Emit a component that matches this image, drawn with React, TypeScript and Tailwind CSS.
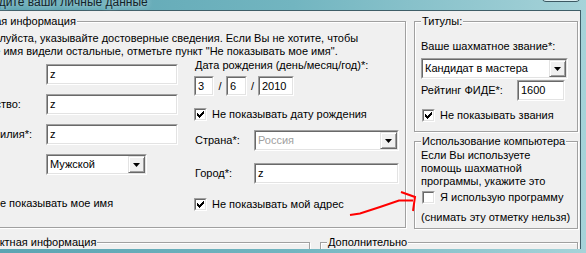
import React from 'react';

const outerSunk = 'border border-t-[#a0a0a0] border-l-[#a0a0a0] border-r-white border-b-white';
const innerSunk = 'border border-t-[#696969] border-l-[#696969] border-r-[#e3e3e3] border-b-[#e3e3e3] bg-white';
const etched = 'border border-[#a0a0a0] shadow-[inset_1px_1px_0_#fff,1px_1px_0_#fff]';

function Field({ w, h, value }: { w: string; h: string; value: string }) {
  return (
    <div className={`${outerSunk} ${w} ${h} shrink-0`}>
      <div className={`${innerSunk} h-full flex items-center pl-[2px] whitespace-nowrap overflow-hidden`}>{value}</div>
    </div>
  );
}

function DropBtn() {
  return (
    <div className="h-full w-[17px] shrink-0 border border-t-[#e3e3e3] border-l-[#e3e3e3] border-b-[#696969] border-r-[#696969] bg-[#f0f0f0] shadow-[inset_1px_1px_0_#fff,inset_-1px_-1px_0_#a0a0a0] flex items-center justify-center">
      <svg width="7" height="4" viewBox="0 0 7 4">
        <path d="M0 0h7L3.5 4z" fill="#000" />
      </svg>
    </div>
  );
}

function Select({ w, value, disabled }: { w: string; value: string; disabled?: boolean }) {
  return (
    <div className={`${outerSunk} ${w} h-[21px] shrink-0`}>
      <div className={`${innerSunk} h-full flex items-center`}>
        <div className={`flex-1 pl-[2px] whitespace-nowrap ${disabled ? 'text-[#a0a0a0]' : ''}`}>{value}</div>
        <DropBtn />
      </div>
    </div>
  );
}

function Check({ on }: { on?: boolean }) {
  return (
    <div className={`${outerSunk} w-[13px] h-[13px] shrink-0`}>
      <div className={`${innerSunk} w-full h-full flex items-center justify-center`}>
        {on && (
          <svg width="7" height="7" viewBox="0 0 7 7">
            <path
              d="M6 0h1v1h-1z M5 1h2v1h-2z M0 2h1v1h-1z M4 2h3v1h-3z M0 3h2v1h-2z M3 3h3v1h-3z M0 4h5v1h-5z M1 5h3v1h-3z M2 6h1v1h-1z"
              fill="#000"
            />
          </svg>
        )}
      </div>
    </div>
  );
}

function Legend({ children }: { children: React.ReactNode }) {
  return <div className="-mt-[7px] ml-[6px] px-[1px] w-fit bg-[#f0f0f0] whitespace-nowrap">{children}</div>;
}

export default function App() {
  return (
    <div className="relative w-[586px] h-[253px] overflow-hidden bg-gradient-to-r from-[#5ca4b2] via-[#72b5c0] to-[#a6d3d9] font-['Liberation_Sans',Arial,sans-serif] text-[11px] leading-[13px] text-black">
      {/* title bar */}
      <div className="relative h-[14px]">
        <div className="-ml-[22px] -mt-[4px] text-[12px] leading-[13px] text-[#132329] whitespace-nowrap [text-shadow:0_0_6px_rgba(255,255,255,0.8)]">
          Введите ваши личные данные
        </div>
        <div className="absolute left-[541px] top-[-10px] w-[40px] h-[16px] rounded-b-[5px] border border-[#3c5862] bg-[#b5dce1]/50 shadow-[inset_0_0_0_1px_rgba(255,255,255,0.55)]">
          <svg className="absolute left-[13px] top-[2px]" width="12" height="10" viewBox="0 0 12 10">
            <path d="M1 0 L11 10 M11 0 L1 10" stroke="#3c5862" strokeWidth="3.4" />
            <path d="M1 0 L11 10 M11 0 L1 10" stroke="#fff" strokeWidth="1.6" />
          </svg>
        </div>
      </div>

      {/* client area */}
      <div className="w-[581px] h-[239px] bg-[#f0f0f0] border-t border-r border-[#3f5e68] overflow-hidden">
        <div className="flex items-start mt-[10px]">
          {/* personal info */}
          <div className={`ml-[-38px] w-[444px] h-[207px] shrink-0 ${etched}`}>
            <Legend>Личная информация</Legend>
            <div className="mt-[4px] pl-[9px] whitespace-nowrap">
              Пожалуйста, указывайте достоверные сведения. Если Вы не хотите, чтобы
              <br />
              Ваше имя видели остальные, отметьте пункт "Не показывать мое имя".
            </div>
            <div className="flex">
              <div className="pt-[6px] flex flex-col gap-[9px]">
                <div className="flex items-center h-[21px]">
                  <div className="w-[83px] pl-[7px] whitespace-nowrap">Имя*:</div>
                  <Field w="w-[132px]" h="h-[21px]" value="z" />
                </div>
                <div className="flex items-center h-[21px]">
                  <div className="w-[83px] pl-[7px] whitespace-nowrap">Отчество:</div>
                  <Field w="w-[132px]" h="h-[21px]" value="z" />
                </div>
                <div className="flex items-center h-[21px]">
                  <div className="w-[83px] pl-[15px] whitespace-nowrap">Фамилия*:</div>
                  <Field w="w-[132px]" h="h-[21px]" value="z" />
                </div>
                <div className="flex items-center h-[21px]">
                  <div className="w-[83px] pl-[7px] whitespace-nowrap">Пол*:</div>
                  <Select w="w-[101px]" value="Мужской" />
                </div>
                <div className="flex items-center h-[13px] mt-[13px] pl-[11px]">
                  <Check on />
                  <span className="ml-[5px] whitespace-nowrap">Не показывать мое имя</span>
                </div>
              </div>

              <div className="ml-[16px] pt-[1px] flex flex-col">
                <div className="whitespace-nowrap pl-[1px]">Дата рождения (день/месяц/год)*:</div>
                <div className="flex items-center mt-[4px] h-[20px]">
                  <Field w="w-[20px]" h="h-[20px]" value="3" />
                  <span className="w-[12px] text-center">/</span>
                  <Field w="w-[21px]" h="h-[20px]" value="6" />
                  <span className="w-[11px] text-center">/</span>
                  <Field w="w-[36px]" h="h-[20px]" value="2010" />
                </div>
                <div className="flex items-center h-[13px] mt-[12px]">
                  <Check on />
                  <span className="ml-[5px] whitespace-nowrap">Не показывать дату рождения</span>
                </div>
                <div className="flex items-center h-[21px] mt-[9px]">
                  <div className="w-[60px] pl-[1px] whitespace-nowrap">Страна*:</div>
                  <Select w="w-[145px]" value="Россия" disabled />
                </div>
                <div className="flex items-center h-[21px] mt-[12px]">
                  <div className="w-[60px] pl-[1px] whitespace-nowrap">Город*:</div>
                  <Field w="w-[145px]" h="h-[21px]" value="z" />
                </div>
                <div className="flex items-center h-[13px] mt-[14px]">
                  <Check on />
                  <span className="ml-[5px] whitespace-nowrap">Не показывать мой адрес</span>
                </div>
              </div>
            </div>
          </div>

          {/* right column */}
          <div className="ml-[8px] flex flex-col">
            <div className={`w-[164px] h-[111px] ${etched}`}>
              <Legend>Титулы:</Legend>
              <div className="px-[6px]">
                <div className="mt-[12px] whitespace-nowrap">Ваше шахматное звание*:</div>
                <div className="mt-[5px]">
                  <Select w="w-[147px]" value="Кандидат в мастера" />
                </div>
                <div className="mt-[1px] flex items-center h-[21px]">
                  <div className="w-[96px] whitespace-nowrap">Рейтинг ФИДЕ*:</div>
                  <Field w="w-[48px]" h="h-[21px]" value="1600" />
                </div>
                <div className="mt-[8px] flex items-center h-[13px] pl-[1px]">
                  <Check on />
                  <span className="ml-[5px] whitespace-nowrap">Не показывать звания</span>
                </div>
              </div>
            </div>

            <div className={`mt-[9px] w-[164px] h-[88px] ${etched}`}>
              <Legend>Использование компьютера</Legend>
              <div className="px-[6px]">
                <div className="mt-[1px] whitespace-nowrap">
                  Если Вы используете
                  <br />
                  помощь шахматной
                  <br />
                  программы, укажите это
                </div>
                <div className="mt-[3px] flex items-center h-[13px] pl-[1px]">
                  <Check />
                  <span className="ml-[5px] whitespace-nowrap">Я использую программу</span>
                </div>
                <div className="mt-[7px] whitespace-nowrap">(снимать эту отметку нельзя)</div>
              </div>
            </div>
          </div>
        </div>

        {/* bottom groups */}
        <div className="flex mt-[13px]">
          <div className={`ml-[-38px] w-[348px] h-[60px] shrink-0 ${etched}`}>
            <Legend>Контактная информация</Legend>
          </div>
          <div className={`ml-[10px] w-[258px] h-[60px] shrink-0 ${etched}`}>
            <Legend>Дополнительно</Legend>
          </div>
        </div>
      </div>

      {/* red hand-drawn arrow */}
      <svg className="absolute left-0 top-0 pointer-events-none" width="586" height="253" viewBox="0 0 586 253">
        <path d="M350 215 L360 213.5 L380 207 L399 200.5 L413 200.5" stroke="#f00" strokeWidth="2" fill="none" />
        <path d="M401 192 L415 197 L413 211" stroke="#f00" strokeWidth="2" fill="none" />
      </svg>
    </div>
  );
}
